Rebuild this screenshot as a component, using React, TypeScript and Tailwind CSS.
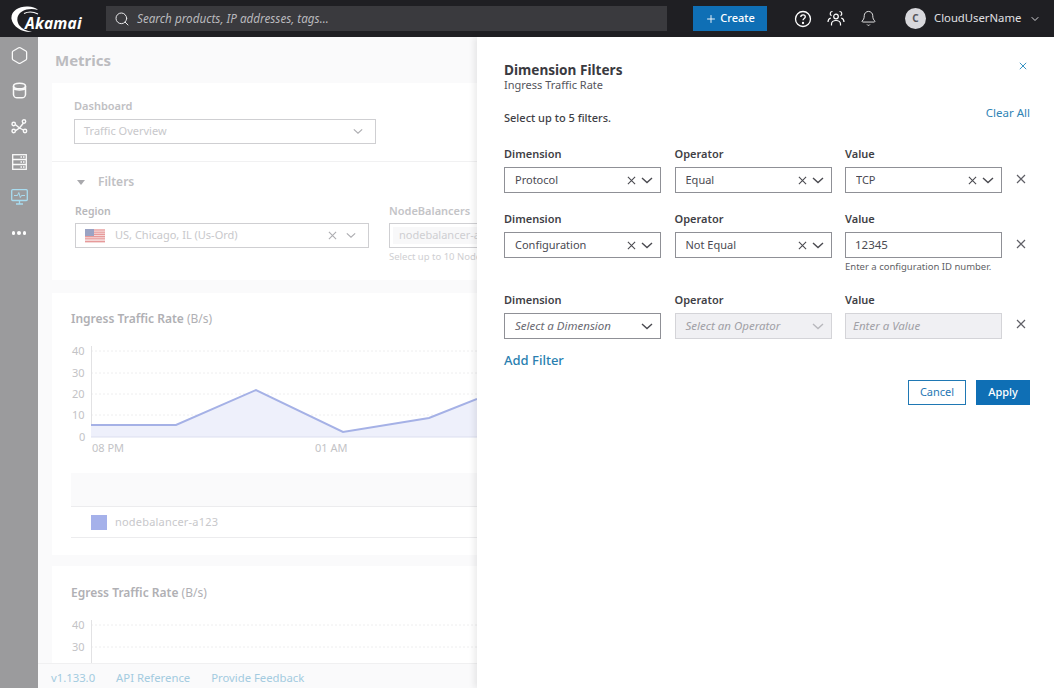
import React from "react";
import { Search, Plus, Bell, ChevronDown, Hexagon } from "lucide-react";

const FONT = "font-['Noto_Sans','Open_Sans',sans-serif]";

function Chevron({ className = "text-[#4a4a50]" }: { className?: string }) {
  return (
    <svg width="12" height="7" viewBox="0 0 12 7" fill="none" className={className}>
      <path d="M1 1l5 4.5L11 1" stroke="currentColor" strokeWidth="1.4" />
    </svg>
  );
}

function Cross({ size = 9, className = "text-[#4a4a50]" }: { size?: number; className?: string }) {
  return (
    <svg width={size} height={size} viewBox="0 0 10 10" fill="none" className={className}>
      <path d="M1 1l8 8M9 1l-8 8" stroke="currentColor" strokeWidth="1.2" />
    </svg>
  );
}

function SelectBox({ value, clear = true }: { value: string; clear?: boolean }) {
  return (
    <div className="h-[26px] border border-[#8f9096] bg-white flex items-center pl-[10px] pr-[7px] text-[11px] text-[#4a4a52]">
      <span className="flex-1 truncate">{value}</span>
      {clear && <Cross />}
      <span className="ml-[5px] flex"><Chevron /></span>
    </div>
  );
}

function FilterLabel({ children }: { children: React.ReactNode }) {
  return <div className="text-[11px] leading-[14px] font-semibold text-[#3f3f46] mb-[6px]">{children}</div>;
}

function RowX({ top }: { top: string }) {
  return (
    <div className={`flex justify-start ${top}`}>
      <Cross size={10} className="text-[#5f5f66]" />
    </div>
  );
}

function Logo() {
  return (
    <div className="relative w-[72px] h-[30px] ml-[11px]">
      <svg width="30" height="30" viewBox="0 0 30 30" className="absolute left-0 top-0">
        <path d="M21 28C12 29 2 23 .5 15C-.5 7 8 2 17 2.500C21 2.500 25 4 27 6C22 4.500 16 4.500 11 7.500C6 10.500 5 16 8 21C11 25 16 27 21 28Z" fill="#ffffff" />
        <path d="M13 9.500C17 7.500 22 7.500 27 10" stroke="#ffffff" strokeWidth="1.200" fill="none" />
      </svg>
      <span className="absolute left-[14px] top-[8px] text-[15.500px] leading-[22px] font-bold italic text-white tracking-[0.2px] font-['Open_Sans',sans-serif]">Akamai</span>
    </div>
  );
}

function PeopleIcon() {
  return (
    <svg width="18" height="17" viewBox="0 0 18 17" fill="none" stroke="#fff" strokeWidth="1.2">
      <circle cx="9" cy="6.500" r="2.300" />
      <path d="M4.500 15.500v-1.500c0-2 2-3.500 4.500-3.500s4.500 1.500 4.500 3.500v1.500" />
      <path d="M5.500 1.500a2.200 2.200 0 0 0-1 4.200M12.500 1.500a2.200 2.200 0 0 1 1 4.200M1 12c0-2 1-3.500 2.800-4M17 12c0-2-1-3.500-2.800-4" />
    </svg>
  );
}

function SideIcons() {
  return (
    <div className="flex flex-col items-center text-[#fafafa]">
      <div className="h-[36px] flex items-center justify-center">
        <Hexagon size={19} strokeWidth={1.6} />
      </div>
      <div className="h-[35px] flex items-center justify-center">
        <svg width="15" height="17" viewBox="0 0 15 17" fill="none" stroke="currentColor" strokeWidth="1.500">
          <path d="M1.500 4v8.500c0 2 2 3.300 3.500 3.300h5c1.500 0 3.500-1.300 3.500-3.300V4" />
          <ellipse cx="7.500" cy="4" rx="6" ry="2.800" />
          <path d="M1.500 6.500c1 1 3 1.500 6 1.500s5-.5 6-1.500" />
        </svg>
      </div>
      <div className="h-[36px] flex items-center justify-center">
        <svg width="17" height="15" viewBox="0 0 17 15" fill="none" stroke="currentColor" strokeWidth="1.400">
          <circle cx="2.700" cy="5" r="1.700" />
          <circle cx="2.700" cy="12" r="1.700" />
          <circle cx="13" cy="2.500" r="1.700" />
          <circle cx="14" cy="12" r="1.700" />
          <path d="M4.300 5.500L8.500 9l4-5M8.500 9l3.800 2M4.300 11.800L8.500 9" />
        </svg>
      </div>
      <div className="h-[35px] flex items-center justify-center">
        <svg width="15" height="16" viewBox="0 0 15 16" fill="none" stroke="currentColor" strokeWidth="1.300">
          <rect x=".7" y=".7" width="13.600" height="14.600" />
          <path d="M.7 5.500h13.600M.7 10.500h13.600" />
          <path d="M8.500 3h4M8.500 8h4M8.500 13h4" strokeDasharray="1.500 1" />
        </svg>
      </div>
      <div className="h-[36px] flex items-center justify-center text-[#a8dcf0]">
        <svg width="17" height="16" viewBox="0 0 17 16" fill="none" stroke="currentColor" strokeWidth="1.300">
          <rect x=".7" y=".7" width="15.600" height="10.800" rx="1" />
          <path d="M8.500 11.500v3M5 15h7" />
          <path d="M3 6.500h3.500l1.300-3 1.500 5 1.200-2h3.500" strokeWidth="1" />
        </svg>
      </div>
      <div className="h-[36px] flex items-center justify-center gap-[2px]">
        <span className="w-[3.500px] h-[3.500px] rounded-full bg-white" />
        <span className="w-[3.500px] h-[3.500px] rounded-full bg-white" />
        <span className="w-[3.500px] h-[3.500px] rounded-full bg-white" />
      </div>
    </div>
  );
}

function Flag() {
  return (
    <svg width="20" height="14" viewBox="0 0 20 14" className="shrink-0">
      <rect width="20" height="14" fill="#f4d8d8" />
      <path d="M0 1h20M0 3.200h20M0 5.400h20M0 7.600h20M0 9.800h20M0 12.500h20" stroke="#e79a9a" strokeWidth="1.100" />
      <rect width="9" height="7" fill="#9aa3c4" />
    </svg>
  );
}

function IngressChart() {
  return (
    <svg width="406" height="112" viewBox="0 0 406 112" className="block">
      <path d="M20 7H406M20 29H406M20 50H406M20 71H406" stroke="#eeeeef" strokeWidth="1" strokeDasharray="2 2" />
      <path d="M20.500 2V93" stroke="#e2e2e4" strokeWidth="1" />
      <path d="M20 81L105 81L185 46L272 88L358 74L406 55V93H20Z" fill="#eef0fb" />
      <path d="M20 81L105 81L185 46L272 88L358 74L406 55" fill="none" stroke="#a5b1e6" strokeWidth="2" />
      <path d="M20 93H406" stroke="#dcdfef" strokeWidth="1" />
      <g fontSize="11" fill="#c3c3c6" fontFamily="Noto Sans, sans-serif">
        <text x="1" y="11">40</text>
        <text x="1" y="33">30</text>
        <text x="1" y="54">20</text>
        <text x="1" y="75">10</text>
        <text x="8" y="97">0</text>
        <text x="21" y="108">08 PM</text>
        <text x="244" y="108">01 AM</text>
      </g>
    </svg>
  );
}

function EgressChart() {
  return (
    <svg width="406" height="50" viewBox="0 0 406 50" className="block">
      <path d="M20 7H406M20 29H406" stroke="#eeeeef" strokeWidth="1" strokeDasharray="2 2" />
      <path d="M20.500 2V50" stroke="#e2e2e4" strokeWidth="1" />
      <g fontSize="11" fill="#c3c3c6" fontFamily="Noto Sans, sans-serif">
        <text x="1" y="11">40</text>
        <text x="1" y="33">30</text>
      </g>
    </svg>
  );
}

function Background() {
  return (
    <div className="w-[439px] shrink-0 overflow-hidden bg-[#fafafb] relative h-full">
      <div className="pl-[14px] w-[439px]">
        <div className="text-[15px] leading-[20px] font-bold text-[#bcbcc0] pl-[3px] pt-[13px] h-[46px]">Metrics</div>
        <div className="bg-white h-[197px] w-[425px]">
          <div className="pl-[22px] pt-[16px] h-[79px] border-b border-[#f1f1f2]">
            <div className="text-[11px] leading-[14px] font-semibold text-[#c0c0c3] mb-[6px]">Dashboard</div>
            <div className="w-[302px] h-[25px] border border-[#cfcfd2] flex items-center pl-[9px] pr-[12px] text-[11px] text-[#c8c8cb]">
              <span className="flex-1">Traffic Overview</span>
              <Chevron className="text-[#adadb1] w-[10px]" />
            </div>
          </div>
          <div className="pl-[23px] pt-[12px]">
            <div className="flex items-center h-[16px] pl-[2px]">
              <span className="w-0 h-0 border-x-[4px] border-x-transparent border-t-[5px] border-t-[#a9a9ad]" />
              <span className="ml-[13px] text-[12px] font-semibold text-[#c0c0c3]">Filters</span>
            </div>
            <div className="flex mt-[14px]">
              <div className="w-[294px] shrink-0">
                <div className="text-[10.500px] leading-[14px] font-semibold text-[#b8b8bb] mb-[5px]">Region</div>
                <div className="h-[25px] border border-[#cfcfd2] flex items-center pl-[9px] pr-[12px] text-[11px] text-[#c8c8cb]">
                  <Flag />
                  <span className="flex-1 ml-[10px]">US, Chicago, IL (Us-Ord)</span>
                  <Cross className="text-[#adadb1]" />
                  <span className="ml-[9px] flex"><Chevron className="text-[#adadb1] w-[10px]" /></span>
                </div>
              </div>
              <div className="ml-[20px] w-[150px] shrink-0">
                <div className="text-[11px] leading-[14px] font-semibold text-[#c4c4c7] mb-[5px]">NodeBalancers</div>
                <div className="h-[25px] border border-[#cfcfd2] flex items-center pl-[3px] overflow-hidden">
                  <span className="bg-[#f8f8f9] pl-[6px] text-[11px] text-[#cfcfd2] whitespace-nowrap">nodebalancer-a123</span>
                </div>
                <div className="text-[9.500px] leading-[12px] mt-[3px] text-[#cfcfd2] whitespace-nowrap">Select up to 10 NodeBalancers</div>
              </div>
            </div>
          </div>
        </div>
        <div className="bg-white h-[262px] w-[425px] mt-[13px] pl-[19px] pt-[18px]">
          <div className="text-[12px] leading-[16px] text-[#b0b0b4]"><span className="font-semibold">Ingress Traffic Rate</span> (B/s)</div>
          <div className="mt-[17px]"><IngressChart /></div>
          <div className="h-[34px] bg-[#fafafb] border-b border-[#ececee] mt-[17px]" />
          <div className="h-[31px] border-b border-[#ececee] flex items-center pl-[20px]">
            <span className="w-[16px] h-[15px] bg-[#a5b1ea]" />
            <span className="ml-[8px] text-[11px] text-[#c8c8cb] tracking-[0.2px]">nodebalancer-a123</span>
          </div>
        </div>
        <div className="bg-white h-[122px] w-[425px] mt-[11px] pl-[19px] pt-[19px]">
          <div className="text-[12px] leading-[16px] text-[#b0b0b4]"><span className="font-semibold">Egress Traffic Rate</span> (B/s)</div>
          <div className="mt-[17px]"><EgressChart /></div>
        </div>
      </div>
      <div className="absolute left-0 right-0 bottom-0 h-[25px] bg-[#fafafb] border-t border-[#f0f0f1] pl-[13px] pt-[5px] flex items-center text-[11.300px] text-[#a3cbe0]">
        <span>v1.133.0</span>
        <span className="ml-[21px]">API Reference</span>
        <span className="ml-[21px]">Provide Feedback</span>
      </div>
    </div>
  );
}

function Drawer() {
  return (
    <div className="w-[577px] shrink-0 h-full bg-white shadow-[-3px_0_6px_rgba(0,0,0,0.08)] relative z-10 pl-[27px] pr-[24px] text-[#3f3f46]">
      <div className="flex justify-between pt-[24px]">
        <div>
          <div className="text-[13.600px] leading-[17px] font-bold text-[#3a3a40]">Dimension Filters</div>
          <div className="text-[11px] leading-[14px] text-[#55555c]">Ingress Traffic Rate</div>
        </div>
        <div className="pt-[1px] pr-[3px]"><Cross size={8} className="text-[#2f8fc2]" /></div>
      </div>
      <div className="flex justify-between items-start mt-[11px] h-[44px]">
        <div className="text-[11px] leading-[14px] mt-[8px] text-[#3f3f46] font-medium">Select up to 5 filters.</div>
        <div className="text-[11.500px] leading-[14px] mt-[3px] text-[#2f84b5]">Clear All</div>
      </div>
      <div className="grid grid-cols-[157px_157px_157px_28px] gap-x-[13.500px]">
        <div><FilterLabel>Dimension</FilterLabel><SelectBox value="Protocol" /></div>
        <div><FilterLabel>Operator</FilterLabel><SelectBox value="Equal" /></div>
        <div><FilterLabel>Value</FilterLabel><SelectBox value="TCP" /></div>
        <RowX top="pt-[27px]" />

        <div className="mt-[19px]"><FilterLabel>Dimension</FilterLabel><SelectBox value="Configuration" /></div>
        <div className="mt-[19px]"><FilterLabel>Operator</FilterLabel><SelectBox value="Not Equal" /></div>
        <div className="mt-[19px]">
          <FilterLabel>Value</FilterLabel>
          <div className="h-[26px] border border-[#8f9096] flex items-center pl-[9px] text-[11.500px] text-[#4a4a52]">12345</div>
          <div className="text-[9.500px] leading-[12px] mt-[3px] text-[#5f5f66]">Enter a configuration ID number.</div>
        </div>
        <RowX top="pt-[46px]" />

        <div className="mt-[20px]"><FilterLabel>Dimension</FilterLabel>
          <div className="h-[26px] border border-[#8f9096] flex items-center pl-[10px] pr-[7px] text-[11.500px] italic text-[#6a6a72]">
            <span className="flex-1">Select a Dimension</span><Chevron />
          </div>
        </div>
        <div className="mt-[20px]"><FilterLabel>Operator</FilterLabel>
          <div className="h-[26px] border border-[#d4d4d8] bg-[#f0f0f3] flex items-center pl-[10px] pr-[7px] text-[11.500px] italic text-[#a0a0a6]">
            <span className="flex-1">Select an Operator</span><Chevron className="text-[#b8b8bd]" />
          </div>
        </div>
        <div className="mt-[20px]"><FilterLabel>Value</FilterLabel>
          <div className="h-[26px] border border-[#d4d4d8] bg-[#f0f0f3] flex items-center pl-[7px] text-[11.500px] italic text-[#a0a0a6]">Enter a Value</div>
        </div>
        <RowX top="pt-[46px]" />
      </div>
      <div className="text-[13px] leading-[16px] font-medium text-[#2a7fb0] mt-[13px]">Add Filter</div>
      <div className="flex justify-end gap-[10px] mt-[12px]">
        <div className="w-[58px] h-[25px] border border-[#1f78b4] flex items-center justify-center text-[11px] text-[#1f78b4]">Cancel</div>
        <div className="w-[54px] h-[25px] bg-[#0f6fb5] flex items-center justify-center text-[11px] font-medium text-white">Apply</div>
      </div>
    </div>
  );
}

export default function App() {
  return (
    <div className={`w-[1054px] h-[688px] overflow-hidden flex flex-col ${FONT}`}>
      <header className="h-[37px] shrink-0 bg-[#1f1f23] flex items-center text-white">
        <div className="w-[106px] shrink-0"><Logo /></div>
        <div className="w-[561px] h-[25px] bg-[#3a3a3e] flex items-center pl-[8px] shrink-0">
          <Search size={16} strokeWidth={1.5} className="text-[#e8e8ea]" />
          <span className="ml-[7px] text-[11.700px] italic text-[#b9b9bd]">Search products, IP addresses, tags...</span>
        </div>
        <div className="ml-[26px] w-[74px] h-[25px] bg-[#0f6fb5] flex items-center justify-center text-[11px] font-medium">
          <Plus size={12} strokeWidth={1.8} />
          <span className="ml-[3px]">Create</span>
        </div>
        <div className="ml-[27px] flex items-center gap-[15px]">
          <svg width="18" height="18" viewBox="0 0 18 18" fill="none" stroke="#fff" strokeWidth="1.300">
            <circle cx="9" cy="9" r="7.500" />
            <path d="M6.800 7c0-1.300 1-2.200 2.300-2.200s2.200.9 2.200 2c0 1.700-2.300 1.700-2.300 3.500" />
            <circle cx="9" cy="13" r=".5" fill="#fff" />
          </svg>
          <PeopleIcon />
          <Bell size={17} strokeWidth={1.2} />
        </div>
        <div className="ml-[28px] w-[21px] h-[21px] rounded-full bg-[#d8d8dc] flex items-center justify-center text-[10px] font-bold text-[#55555c]">C</div>
        <span className="ml-[8px] text-[11.300px] text-[#e0e0e3]">CloudUserName</span>
        <span className="ml-[8px] flex"><ChevronDown size={12} className="text-[#d8d8dc]" /></span>
      </header>
      <div className="flex flex-1 min-h-0">
        <aside className="w-[38px] shrink-0 bg-[#9b9b9d]"><SideIcons /></aside>
        <Background />
        <Drawer />
      </div>
    </div>
  );
}
